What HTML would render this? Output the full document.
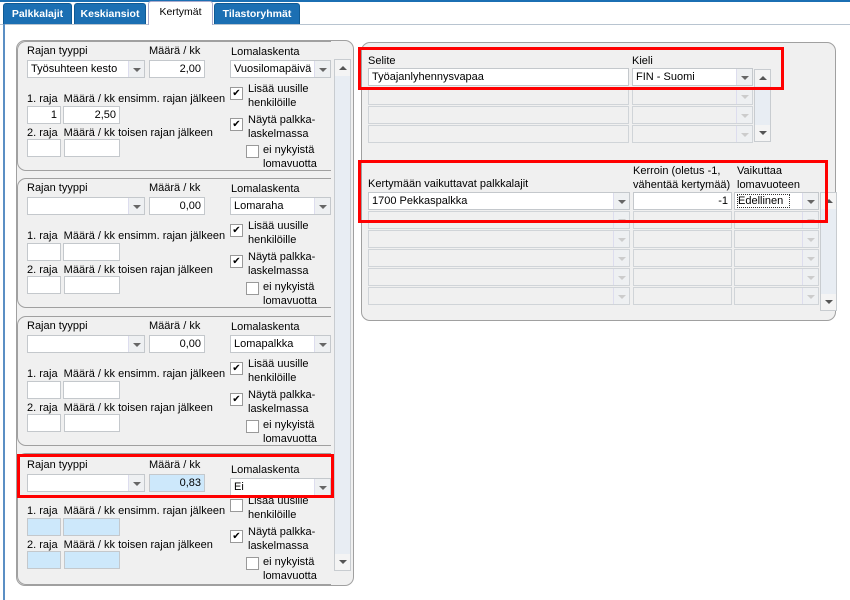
<!DOCTYPE html>
<html><head><meta charset="utf-8"><style>
*{box-sizing:border-box;margin:0;padding:0}
body{width:850px;height:600px;background:#fff;font-family:"Liberation Sans",sans-serif;font-size:11px;color:#000;position:relative;overflow:hidden}
.a{position:absolute}
.tab{position:absolute;top:3px;height:21px;background:#1b6fb3;color:#fff;font-weight:bold;font-size:10.5px;text-align:center;line-height:20px;border:1px solid #0f5a94;border-bottom:none;border-radius:3px 3px 0 0}
.tab.on{background:#fff;color:#000;font-weight:normal;border-color:#aac;top:1px;height:24px}
.pan{position:absolute;background:#f0f0f0;border:1px solid #a0a0a0;border-radius:9px}
.inp{position:absolute;background:#fff;border:1px solid #c4c8cc;height:18px;line-height:16px;padding:0 3px;white-space:nowrap;overflow:hidden}
.r{text-align:right}
.blue{background:#cde8fb}
.dis{background:#f0f0f0;border-color:#d0d4d8}
.dd{position:absolute;right:0;top:0;width:16px;height:100%;background:#eef0f2;border-left:1px solid #dde}
.dd:after{content:"";position:absolute;left:4px;top:7px;border-left:4px solid transparent;border-right:4px solid transparent;border-top:4px solid #666}
.dis .dd:after{border-top-color:#ccc}
.sb{position:absolute;background:#e8edf3;border:1px solid #c8ccd0}
.up,.dn{position:absolute;left:0;width:100%;height:16px;background:#f4f4f4}
.up{top:0}.dn{bottom:0}
.up:after{content:"";position:absolute;left:4px;top:6px;border-left:4px solid transparent;border-right:4px solid transparent;border-bottom:4px solid #555}
.dn:after{content:"";position:absolute;left:4px;top:6px;border-left:4px solid transparent;border-right:4px solid transparent;border-top:4px solid #555}
.cb{position:absolute;width:13px;height:13px;background:#fff;border:1px solid #999;font-size:10px;line-height:11px;text-align:center}
.red{position:absolute;border:3px solid #f00}
.l{position:absolute;white-space:nowrap}
</style></head><body>
<div class="a" style="left:0;top:0;width:850px;height:2px;background:#1b6fb3"></div>
<div class="a" style="left:0;top:24px;width:850px;height:1px;background:#b8c4d0"></div>
<div class="a" style="left:3px;top:24px;width:2px;height:576px;background:#5b8fc4"></div>
<div class="tab" style="left:3px;width:69px">Palkkalajit</div>
<div class="tab" style="left:74px;width:72px">Keskiansiot</div>
<div class="tab on" style="left:148px;width:65px">Kertymät</div>
<div class="tab" style="left:214px;width:86px">Tilastoryhmät</div>

<div class="pan" style="left:16px;top:40px;width:338px;height:546px"></div>
<div class="sb" style="left:334px;top:59px;width:17px;height:512px"><div class="up"></div><div class="dn"></div></div>

<div id="P"></div>

<div class="pan" style="left:361px;top:42px;width:475px;height:279px"></div>
<div class="l" style="left:368px;top:55px">Selite</div>
<div class="l" style="left:632px;top:55px">Kieli</div>
<div class="inp" style="left:368px;top:68px;width:261px">Työajanlyhennysvapaa</div>
<div class="inp" style="left:632px;top:68px;width:121px">FIN - Suomi<div class="dd"></div></div>
<div class="sb" style="left:754px;top:69px;width:17px;height:73px"><div class="up"></div><div class="dn"></div></div>
<div class="inp dis" style="left:368px;top:87px;width:261px"></div><div class="inp dis" style="left:632px;top:87px;width:121px"><div class="dd"></div></div>
<div class="inp dis" style="left:368px;top:106px;width:261px"></div><div class="inp dis" style="left:632px;top:106px;width:121px"><div class="dd"></div></div>
<div class="inp dis" style="left:368px;top:125px;width:261px"></div><div class="inp dis" style="left:632px;top:125px;width:121px"><div class="dd"></div></div>
<div class="red" style="left:358px;top:47px;width:426px;height:43px"></div>

<div class="l" style="left:368px;top:178px">Kertymään vaikuttavat palkkalajit</div>
<div class="l" style="left:633px;top:164px;line-height:14px">Kerroin (oletus -1,<br>vähentää kertymää)</div>
<div class="l" style="left:737px;top:164px;line-height:14px">Vaikuttaa<br>lomavuoteen</div>
<div class="inp" style="left:368px;top:192px;width:262px">1700 Pekkaspalkka<div class="dd"></div></div>
<div class="inp r" style="left:633px;top:192px;width:99px">-1</div>
<div class="inp" style="left:734px;top:192px;width:85px"><span style="outline:1px dotted #333">Edellinen&nbsp;&nbsp;</span><div class="dd"></div></div>
<div class="sb" style="left:820px;top:192px;width:17px;height:119px"><div class="up"></div><div class="dn"></div></div>
<div id="R"></div>
<div class="red" style="left:358px;top:160px;width:470px;height:63px"></div>

<div class="red" style="left:17px;top:454px;width:317px;height:44px"></div>

<script>
var P=document.getElementById('P'),h='';
var tops=[41,178,316,453];
var data=[["Työsuhteen kesto","2,00","Vuosilomapäivä","1","2,50",1,1,0],["","0,00","Lomaraha","","",1,1,0],["","0,00","Lomapalkka","","",1,1,0],["","0,83","Ei","","",0,1,0]];
for(var i=0;i<4;i++){var t=tops[i],d=data[i],b=i==3?' blue':'';var o=i==3?2:0;
h+='<div class="pan" style="left:17px;top:'+t+'px;width:330px;height:'+(i==3?132:130)+'px;border-radius:9px;clip-path:inset(0 16px 0 0)"></div>';
h+='<div class="l" style="left:27px;top:'+(t+4+o)+'px">Rajan tyyppi</div><div class="l" style="left:149px;top:'+(t+4+o)+'px">Määrä / kk</div><div class="l" style="left:231px;top:'+(t+5+o*3)+'px">Lomalaskenta</div>';
h+='<div class="inp" style="left:27px;top:'+(t+19+o)+'px;width:118px">'+d[0]+'<div class="dd"></div></div>';
h+='<div class="inp r'+b+'" style="left:149px;top:'+(t+19+o)+'px;width:56px">'+d[1]+'</div>';
h+='<div class="inp" style="left:230px;top:'+(t+19+o*3)+'px;width:101px">'+d[2]+'<div class="dd"></div></div>';
h+='<div class="l" style="left:27px;top:'+(t+52)+'px">1. raja&nbsp; Määrä / kk ensimm. rajan jälkeen</div>';
h+='<div class="inp r'+b+'" style="left:27px;top:'+(t+65)+'px;width:34px">'+d[3]+'</div><div class="inp r'+b+'" style="left:63px;top:'+(t+65)+'px;width:57px">'+d[4]+'</div>';
h+='<div class="l" style="left:27px;top:'+(t+86)+'px">2. raja&nbsp; Määrä / kk toisen rajan jälkeen</div>';
h+='<div class="inp'+b+'" style="left:27px;top:'+(t+98)+'px;width:34px"></div><div class="inp'+b+'" style="left:64px;top:'+(t+98)+'px;width:56px"></div>';
h+='<div class="cb" style="left:230px;top:'+(t+46)+'px">'+(d[5]?'✔':'')+'</div><div class="l" style="left:248px;top:'+(t+41)+'px;line-height:14px">Lisää uusille<br>henkilöille</div>';
h+='<div class="cb" style="left:230px;top:'+(t+77)+'px">✔</div><div class="l" style="left:248px;top:'+(t+72)+'px;line-height:14px">Näytä palkka-<br>laskelmassa</div>';
h+='<div class="cb" style="left:246px;top:'+(t+104)+'px"></div><div class="l" style="left:263px;top:'+(t+102)+'px;line-height:14px">ei nykyistä<br>lomavuotta</div>';}
P.innerHTML=h;
var R='';for(var j=0;j<5;j++){var y=211+j*19;
R+='<div class="inp dis" style="left:368px;top:'+y+'px;width:262px"><div class="dd"></div></div><div class="inp dis" style="left:633px;top:'+y+'px;width:99px"></div><div class="inp dis" style="left:734px;top:'+y+'px;width:85px"><div class="dd"></div></div>';}
document.getElementById('R').innerHTML=R;
</script>
</body></html>
